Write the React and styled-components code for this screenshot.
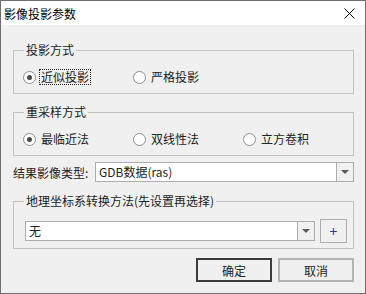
import styled, { createGlobalStyle } from "styled-components";

const GlobalStyle = createGlobalStyle`
  html, body {
    margin: 0;
    padding: 0;
    background: #f0f0f0;
  }
  * {
    box-sizing: border-box;
  }
`;

const Window = styled.div`
  width: 366px;
  height: 294px;
  border: 1px solid #6f6f6f;
  background: #f0f0f0;
  display: flex;
  flex-direction: column;
  font-family: "Noto Sans CJK SC", "Noto Sans", sans-serif;
  font-size: 12px;
  color: #222;
`;

const TitleBar = styled.div`
  height: 24px;
  background: #fff;
  display: flex;
  align-items: center;
  justify-content: space-between;
  padding: 0 10px 0 3px;
  color: #000;
`;

const Body = styled.div`
  padding: 17px 11px 0 12px;
  display: flex;
  flex-direction: column;
`;

const Group = styled.fieldset`
  margin: ${(p) => p.$mt || 0}px 0 0;
  padding: ${(p) => p.$pad};
  border: 1px solid #c2c2c2;
  min-width: 0;
`;

const Legend = styled.legend`
  padding: 0 2px;
  margin-left: ${(p) => p.$ml || 0}px;
  line-height: 16px;
  color: #222;
`;

const RadioRow = styled.div`
  display: grid;
  grid-template-columns: 110px 110px 110px;
  height: 16px;
`;

const RadioItem = styled.div`
  display: flex;
  align-items: center;
  gap: 3px;
`;

const Circle = styled.span`
  width: 13px;
  height: 13px;
  border-radius: 50%;
  border: 1px solid #8e8e8e;
  background: #fff;
  display: flex;
  align-items: center;
  justify-content: center;

  &::after {
    content: "";
    width: 5px;
    height: 5px;
    border-radius: 50%;
    background: ${(p) => (p.$on ? "#4a4a4a" : "transparent")};
  }
`;

const RadioLabel = styled.span`
  line-height: 14px;
  padding: 0 1px;
  border: 1px dotted ${(p) => (p.$focus ? "#222" : "transparent")};
`;

const FieldRow = styled.div`
  display: flex;
  align-items: center;
  margin-top: 6px;
  height: 20px;
`;

const FieldLabel = styled.span`
  width: 82px;
  flex-shrink: 0;
  white-space: nowrap;
`;

const Combo = styled.div`
  display: flex;
  height: 20px;
  width: ${(p) => (p.$w ? `${p.$w}px` : "auto")};
  flex: ${(p) => (p.$w ? "none" : 1)};
  border: 1px solid #acacac;
  background: #fff;
`;

const ComboText = styled.span`
  flex: 1;
  padding-left: 3px;
  line-height: 18px;
  color: #222;
`;

const ComboArrow = styled.span`
  width: 17px;
  border-left: 1px solid #acacac;
  background: #f0f0f0;
  display: flex;
  align-items: center;
  justify-content: center;

  &::after {
    content: "";
    border-left: 4px solid transparent;
    border-right: 4px solid transparent;
    border-top: 4px solid #5a5a5a;
  }
`;

const PickRow = styled.div`
  display: flex;
  align-items: center;
  gap: 5px;
  height: 24px;
`;

const SmallButton = styled.button`
  width: 27px;
  height: 24px;
  padding: 0;
  border: 1px solid #adadad;
  background: #f0f0f0;
  font-family: inherit;
  font-size: 14px;
  color: #2a3a8a;
  line-height: 1;
`;

const ButtonBar = styled.div`
  display: flex;
  justify-content: flex-end;
  gap: 6px;
  margin-top: 9px;
`;

const Button = styled.button`
  width: 76px;
  height: 24px;
  padding: 0;
  border: 2px solid ${(p) => (p.$primary ? "#3c3c3c" : "#b4b4b4")};
  background: #f0f0f0;
  font-family: inherit;
  font-size: 12px;
  color: #222;
`;

const CloseIcon = () => (
  <svg width="11" height="11" viewBox="0 0 11 11">
    <path d="M0.5 0.5 L10.5 10.5 M10.5 0.5 L0.5 10.5" stroke="#000" strokeWidth="1" />
  </svg>
);

const Radio = ({ on, focus, children }) => (
  <RadioItem>
    <Circle $on={on} />
    <RadioLabel $focus={focus}>{children}</RadioLabel>
  </RadioItem>
);

export default function App() {
  return (
    <>
      <GlobalStyle />
      <Window>
        <TitleBar>
          <span>影像投影参数</span>
          <CloseIcon />
        </TitleBar>
        <Body>
          <Group $pad="11px 9px 8px 9px">
            <Legend $ml={1}>投影方式</Legend>
            <RadioRow>
              <Radio on focus>近似投影</Radio>
              <Radio>严格投影</Radio>
            </RadioRow>
          </Group>
          <Group $mt={10} $pad="11px 9px 8px 9px">
            <Legend $ml={1}>重采样方式</Legend>
            <RadioRow>
              <Radio on>最临近法</Radio>
              <Radio>双线性法</Radio>
              <Radio>立方卷积</Radio>
            </RadioRow>
          </Group>
          <FieldRow>
            <FieldLabel>结果影像类型:</FieldLabel>
            <Combo>
              <ComboText>GDB数据(ras)</ComboText>
              <ComboArrow />
            </Combo>
          </FieldRow>
          <Group $mt={11} $pad="10px 6px 5px 11px">
            <Legend $ml={-1}>地理坐标系转换方法(先设置再选择)</Legend>
            <PickRow>
              <Combo $w={290}>
                <ComboText>无</ComboText>
                <ComboArrow />
              </Combo>
              <SmallButton>+</SmallButton>
            </PickRow>
          </Group>
          <ButtonBar>
            <Button $primary>确定</Button>
            <Button>取消</Button>
          </ButtonBar>
        </Body>
      </Window>
    </>
  );
}
